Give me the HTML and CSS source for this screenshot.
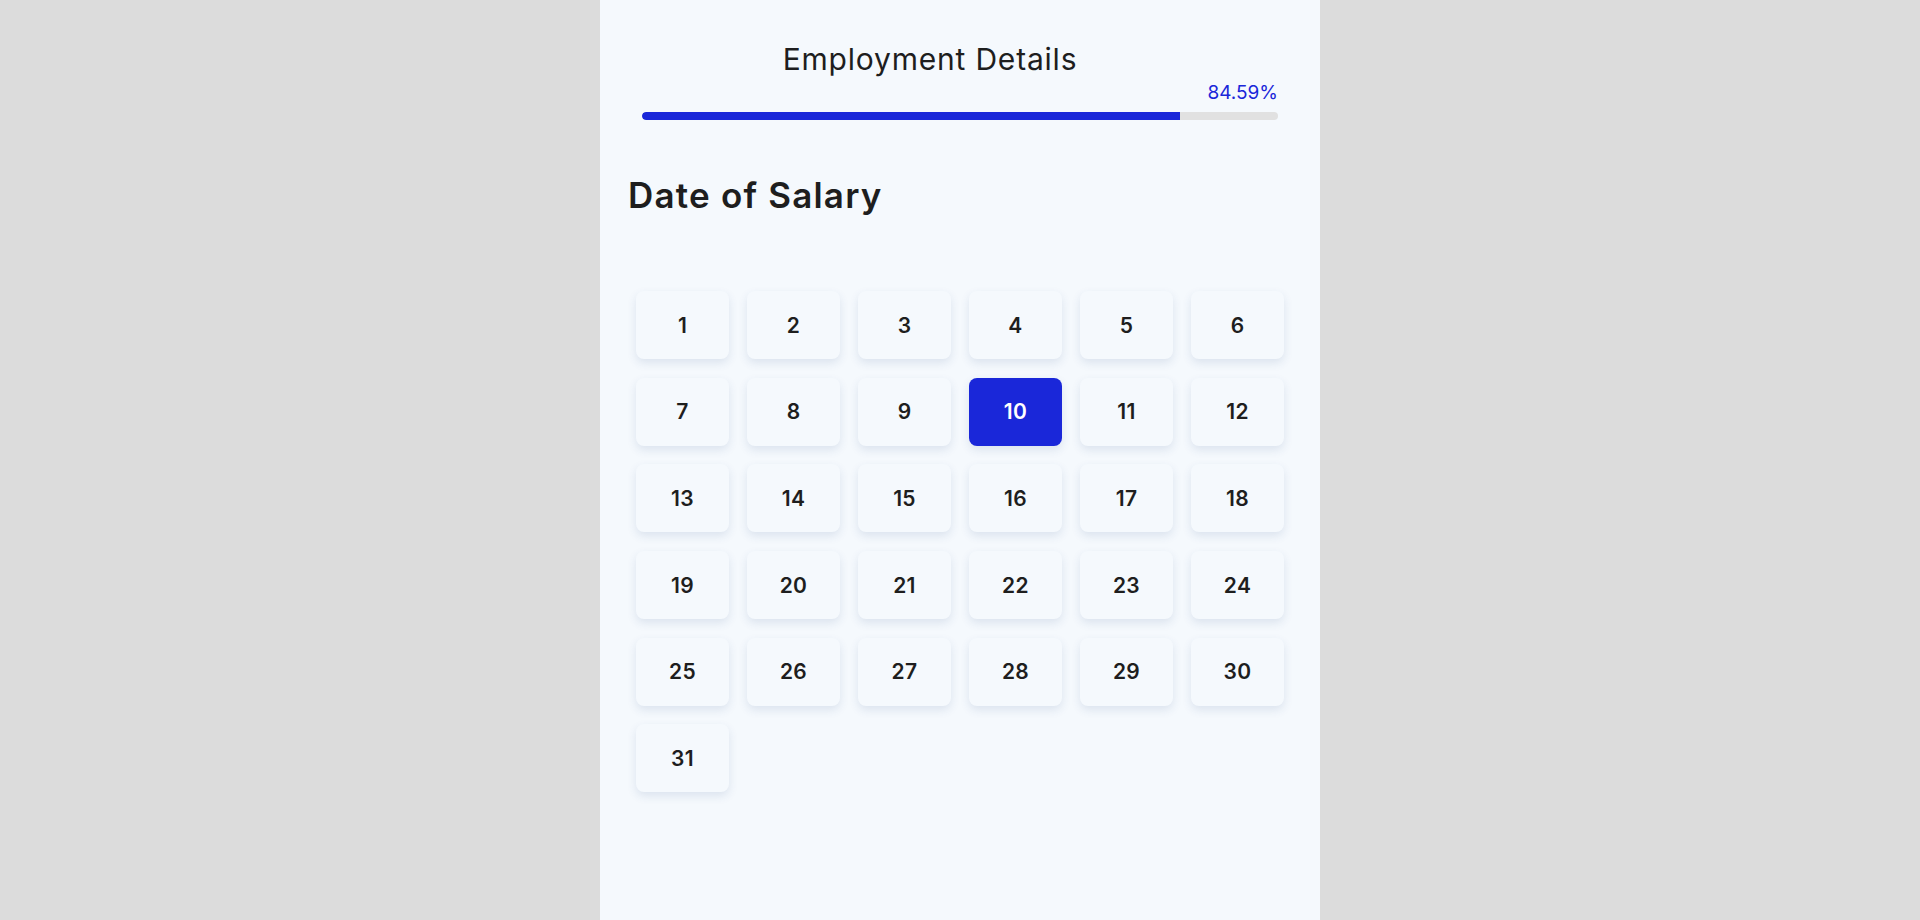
FILE: index.html
```html
<!DOCTYPE html>
<html lang="en">
<head>
<meta charset="utf-8">
<title>Employment Details</title>
<link rel="stylesheet" href="styles.css">
</head>
<body>
<main class="panel">
  <header class="header">
    <h1 class="title">Employment Details</h1>
    <div class="progress-label">84.59%</div>
    <div class="progress-track"><div class="progress-fill" style="width:84.59%"></div></div>
  </header>
  <h2 class="heading">Date of Salary</h2>
  <div class="grid">
    <button class="day">1</button>
    <button class="day">2</button>
    <button class="day">3</button>
    <button class="day">4</button>
    <button class="day">5</button>
    <button class="day">6</button>
    <button class="day">7</button>
    <button class="day">8</button>
    <button class="day">9</button>
    <button class="day day-selected">10</button>
    <button class="day">11</button>
    <button class="day">12</button>
    <button class="day">13</button>
    <button class="day">14</button>
    <button class="day">15</button>
    <button class="day">16</button>
    <button class="day">17</button>
    <button class="day">18</button>
    <button class="day">19</button>
    <button class="day">20</button>
    <button class="day">21</button>
    <button class="day">22</button>
    <button class="day">23</button>
    <button class="day">24</button>
    <button class="day">25</button>
    <button class="day">26</button>
    <button class="day">27</button>
    <button class="day">28</button>
    <button class="day">29</button>
    <button class="day">30</button>
    <button class="day">31</button>
  </div>
</main>
</body>
</html>
```
FILE: styles.css
```css
html, body {
  margin: 0;
  padding: 0;
}
body {
  background: #dcdcdc;
  font-family: "Inter", "Noto Sans", sans-serif;
  color: #1e1e1e;
}
.panel {
  width: 720px;
  min-height: 100vh;
  margin: 0 auto;
  background: #f5f9fd;
  box-sizing: border-box;
  padding: 41px 28px 40px;
}
.header {
  padding: 0 14px;
  display: flex;
  flex-direction: column;
}
.title {
  margin: 0;
  padding-right: 60px;
  text-align: center;
  font-size: 30px;
  line-height: 36px;
  font-weight: 400;
  letter-spacing: 0.8px;
  color: #1e1e1e;
}
.progress-label {
  margin-top: 5px;
  text-align: right;
  font-size: 19px;
  line-height: 22px;
  color: #1a27d9;
}
.progress-track {
  margin-top: 8px;
  height: 8px;
  border-radius: 4px;
  background: #e1e1e1;
  overflow: hidden;
}
.progress-fill {
  height: 100%;
  background: #1a27d9;
  border-radius: 4px 0 0 4px;
}
.heading {
  margin: 54px 0 0;
  font-size: 35px;
  line-height: 42px;
  font-weight: 600;
  letter-spacing: 1.2px;
  color: #1e1e1e;
}
.grid {
  margin: 75px 8px 0;
  display: grid;
  grid-template-columns: repeat(6, 93px);
  grid-auto-rows: 68px;
  column-gap: 18px;
  row-gap: 18.7px;
}
.day {
  border: none;
  border-radius: 8px;
  background: #f5f9fd;
  box-shadow: 0 4px 10px rgba(40, 70, 130, 0.12);
  font-family: "Inter", "Noto Sans", sans-serif;
  font-size: 21px;
  font-weight: 600;
  letter-spacing: 0.3px;
  color: #1e1e1e;
  display: flex;
  align-items: center;
  justify-content: center;
  padding: 0;
}
.day-selected {
  background: #1a27d9;
  color: #ffffff;
}
```
